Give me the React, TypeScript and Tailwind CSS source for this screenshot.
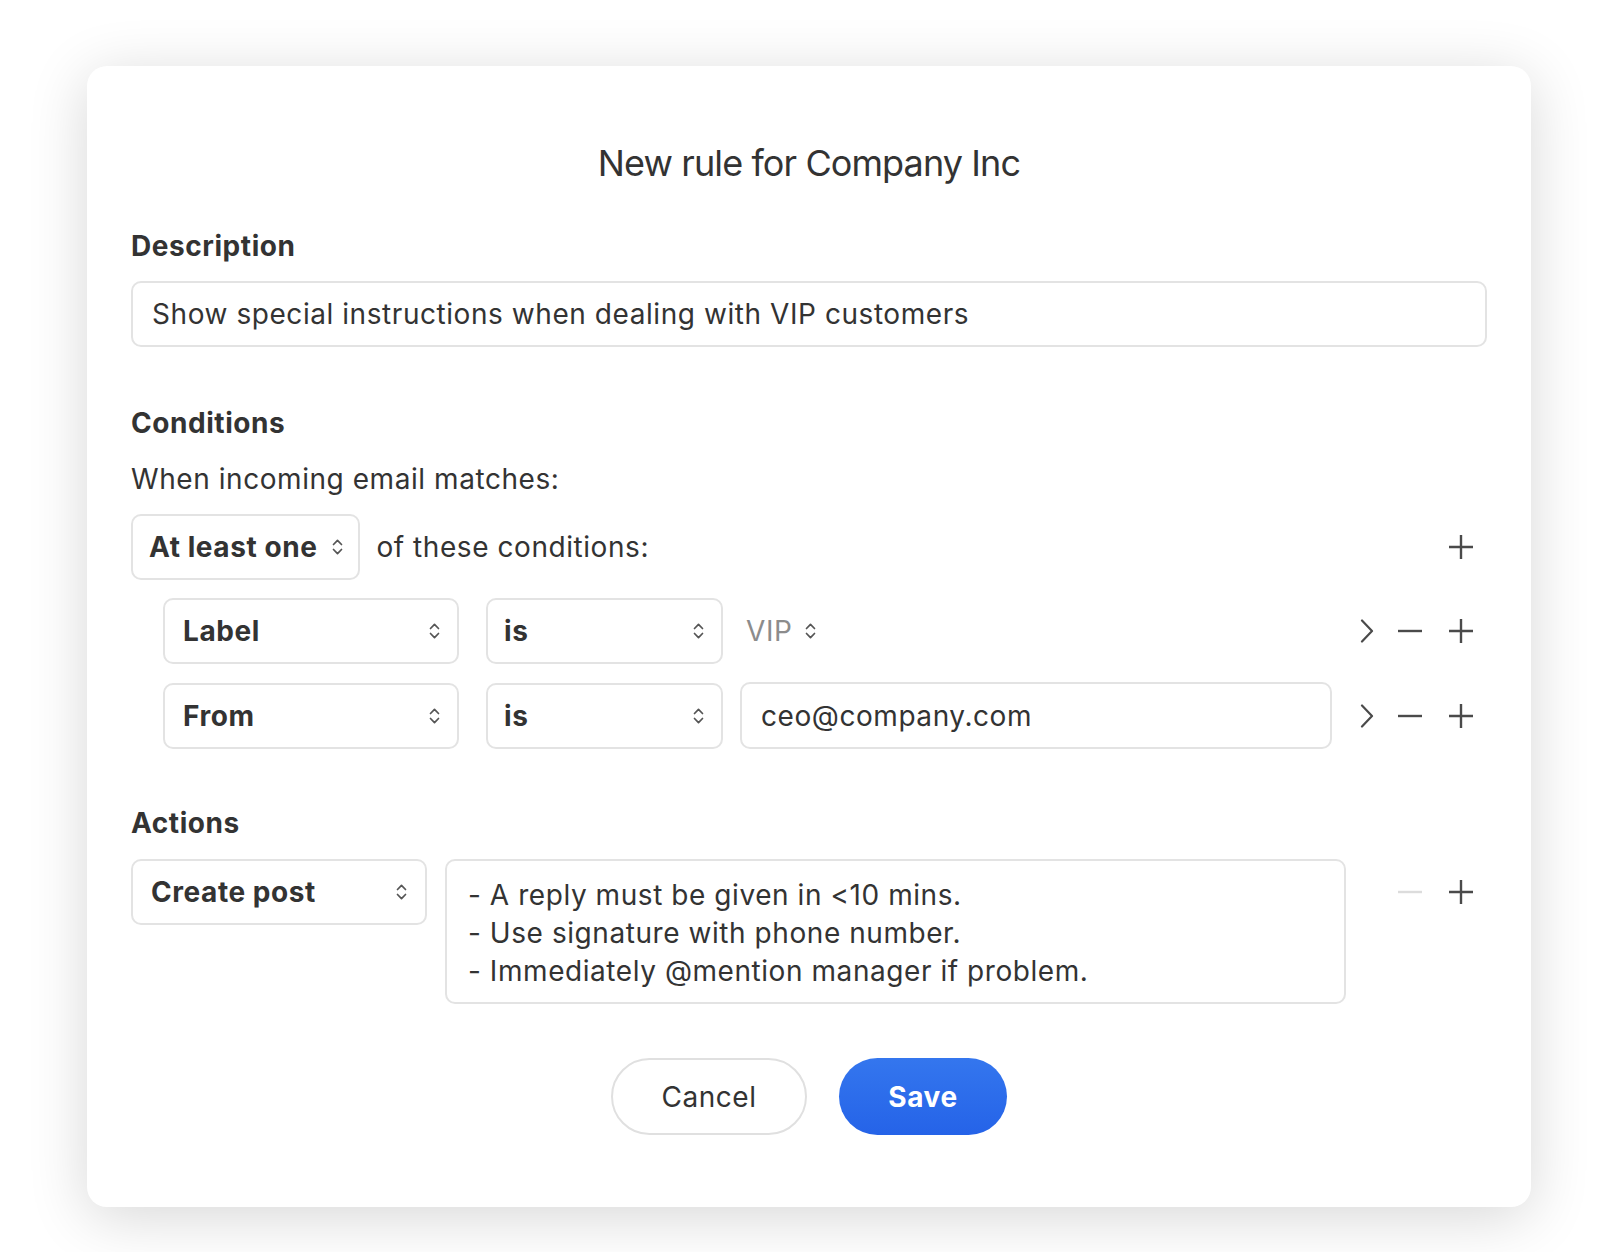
import React from 'react';

const font = { fontFamily: 'Inter, "Noto Sans", sans-serif' };

const UpDown = () => (
  <svg width="13" height="20" viewBox="0 0 13 20" fill="none" stroke="#555" strokeWidth="1.7" strokeLinecap="round" strokeLinejoin="round">
    <path d="M2.5 7.5 L6.5 3.3 L10.5 7.5" />
    <path d="M2.5 12.5 L6.5 16.7 L10.5 12.5" />
  </svg>
);

const Chevron = () => (
  <svg width="14" height="24" viewBox="0 0 14 24" fill="none" stroke="#4a4a4a" strokeWidth="2.2" strokeLinecap="round" strokeLinejoin="round">
    <path d="M2 1.5 L12 12 L2 22.5" />
  </svg>
);

const Minus = ({ light }: { light?: boolean }) => (
  <svg width="24" height="24" viewBox="0 0 24 24" fill="none" stroke={light ? '#dcdcdc' : '#4a4a4a'} strokeWidth="2.4">
    <path d="M0 12 H24" />
  </svg>
);

const Plus = () => (
  <svg width="24" height="24" viewBox="0 0 24 24" fill="none" stroke="#4a4a4a" strokeWidth="2.4">
    <path d="M0 12 H24 M12 0 V24" />
  </svg>
);

const Select = ({ label, className }: { label: string; className: string }) => (
  <div className={`h-[66px] flex items-center justify-between border-2 border-[#e3e3e3] rounded-[10px] bg-white text-[28px] font-bold tracking-[0.02em] text-[#333] ${className}`}>
    <span>{label}</span>
    <UpDown />
  </div>
);

const RowControls = () => (
  <div className="w-[155px] h-[66px] flex items-center pl-[28px]">
    <Chevron />
    <div className="ml-[24px]"><Minus /></div>
    <div className="ml-[27px]"><Plus /></div>
  </div>
);

export default function App() {
  return (
    <div className="min-h-screen bg-white pt-[66px] pb-[45px]" style={font}>
      <div className="mx-auto w-[1444px] h-[1141px] bg-white rounded-[20px] shadow-[0_10px_60px_rgba(0,0,0,0.16)] px-[44px] pt-[75px] text-[#333] text-[28px] tracking-[0.02em]">
        <h1 className="text-center text-[36px] leading-[44px] text-[#333] tracking-[-0.025em]">New rule for Company Inc</h1>

        <div className="mt-[44px] leading-[34px] font-bold tracking-[0.02em]">Description</div>
        <div className="mt-[18px] h-[66px] border-2 border-[#e3e3e3] rounded-[10px] flex items-center pl-[19px]">
          Show special instructions when dealing with VIP customers
        </div>

        <div className="mt-[59px] leading-[34px] font-bold tracking-[0.02em]">Conditions</div>
        <div className="mt-[22px] leading-[34px]">When incoming email matches:</div>

        <div className="mt-[18px] flex items-center">
          <Select label="At least one" className="pl-[16px] pr-[14px] gap-[14px]" />
          <span className="ml-[16px] flex-1">of these conditions:</span>
          <div className="w-[155px] h-[66px] flex items-center justify-end pr-[14px]"><Plus /></div>
        </div>

        <div className="pl-[32px] mt-[18px] flex flex-col gap-[18px]">
          <div className="flex items-center">
            <Select label="Label" className="w-[296px] pl-[18px] pr-[16px]" />
            <Select label="is" className="w-[237px] ml-[27px] pl-[16px] pr-[16px]" />
            <div className="flex-1 ml-[17px] flex items-center gap-[12px] pl-[6px] text-[#8c8c8c]">
              VIP <UpDown />
            </div>
            <RowControls />
          </div>
          <div className="flex items-center">
            <Select label="From" className="w-[296px] pl-[18px] pr-[16px]" />
            <Select label="is" className="w-[237px] ml-[27px] pl-[16px] pr-[16px]" />
            <div className="flex-1 ml-[17px] h-[67px] border-2 border-[#e3e3e3] rounded-[10px] flex items-center pl-[19px]">
              ceo@company.com
            </div>
            <RowControls />
          </div>
        </div>

        <div className="mt-[57px] leading-[34px] font-bold tracking-[0.02em]">Actions</div>
        <div className="mt-[19px] flex items-start">
          <Select label="Create post" className="w-[296px] pl-[18px] pr-[17px]" />
          <div className="ml-[18px] flex-1 h-[145px] border-2 border-[#e3e3e3] rounded-[10px] pl-[21px] pt-[15px] leading-[38px]">
            <div>- A reply must be given in &lt;10 mins.</div>
            <div>- Use signature with phone number.</div>
            <div>- Immediately @mention manager if problem.</div>
          </div>
          <div className="w-[141px] h-[66px] flex items-center pl-[52px]">
            <Minus light />
            <div className="ml-[27px]"><Plus /></div>
          </div>
        </div>

        <div className="mt-[54px] flex justify-center gap-[32px]">
          <button className="w-[196px] h-[77px] rounded-full border-2 border-[#e0e0e0] bg-white text-[28px] tracking-[0.02em] text-[#333]">Cancel</button>
          <button className="w-[168px] h-[77px] rounded-full bg-gradient-to-b from-[#3476ee] to-[#2563e8] text-[28px] font-bold tracking-[0.02em] text-white">Save</button>
        </div>
      </div>
    </div>
  );
}
